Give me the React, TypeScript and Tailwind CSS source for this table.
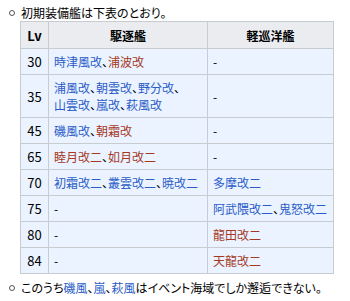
import React from 'react'

type Part = { t: string; red?: boolean }

const rows: { lv: string; dd: Part[][]; cl: Part[] }[] = [
  { lv: '30', dd: [[{ t: '時津風改' }, { t: '浦波改', red: true }]], cl: [] },
  {
    lv: '35',
    dd: [
      [{ t: '浦風改' }, { t: '朝雲改' }, { t: '野分改' }],
      [{ t: '山雲改' }, { t: '嵐改' }, { t: '萩風改' }],
    ],
    cl: [],
  },
  { lv: '45', dd: [[{ t: '磯風改' }, { t: '朝霜改', red: true }]], cl: [] },
  { lv: '65', dd: [[{ t: '睦月改二', red: true }, { t: '如月改二', red: true }]], cl: [] },
  { lv: '70', dd: [[{ t: '初霜改二' }, { t: '叢雲改二' }, { t: '暁改二' }]], cl: [{ t: '多摩改二' }] },
  { lv: '75', dd: [], cl: [{ t: '阿武隈改二' }, { t: '鬼怒改二' }] },
  { lv: '80', dd: [], cl: [{ t: '龍田改二', red: true }] },
  { lv: '84', dd: [], cl: [{ t: '天龍改二', red: true }] },
]

const Links = ({ parts }: { parts: Part[] }) => {
  if (parts.length === 0) return <>-</>
  return (
    <>
      {parts.map((p, i) => (
        <React.Fragment key={i}>
          {i > 0 && '、'}
          <span className={p.red ? 'text-[#a5381e]' : 'text-[#2a5cc8]'}>{p.t}</span>
        </React.Fragment>
      ))}
    </>
  )
}

const Bullet = () => (
  <span className="mt-[5px] mr-[6px] ml-[9px] h-[6px] w-[6px] shrink-0 rounded-full border-[1.5px] border-[#555]" />
)

export default function App() {
  return (
    <div className="h-[301px] w-[350px] overflow-hidden bg-white pt-[5px] font-['Noto_Sans_CJK_JP',sans-serif] text-[12px] leading-[16px] whitespace-nowrap text-black [font-feature-settings:'palt']">
      {/* intro */}
      <div className="flex items-start">
        <Bullet />
        <span>初期装備艦は下表のとおり。</span>
      </div>

      {/* table */}
      <table className="ml-[20px] w-[314px] table-fixed border-collapse border border-[#c8ccd1] leading-[15px]">
        <colgroup>
          <col className="w-[28px]" />
          <col className="w-[159px]" />
          <col />
        </colgroup>
        <thead>
          <tr className="bg-[#eaecf0] font-bold">
            <th className="h-[27px] border border-[#c8ccd1] p-0 text-[13px]">Lv</th>
            <th className="border border-[#c8ccd1] p-0">駆逐艦</th>
            <th className="border border-[#c8ccd1] p-0">軽巡洋艦</th>
          </tr>
        </thead>
        <tbody>
          {rows.map((r) => (
            <tr key={r.lv} className="bg-[#eaf3ff]">
              <td className="border border-[#c8ccd1] py-[5px] text-center text-[13px]">{r.lv}</td>
              <td className={`border border-[#c8ccd1] px-[5px] ${r.dd.length > 1 ? 'py-[4px]' : 'py-[5px]'}`}>
                {r.dd.length === 0 ? (
                  '-'
                ) : (
                  r.dd.map((line, i) => (
                    <div key={i} className={r.dd.length > 1 ? 'leading-[17px]' : ''}>
                      <Links parts={line} />
                      {i < r.dd.length - 1 && '、'}
                    </div>
                  ))
                )}
              </td>
              <td className="border border-[#c8ccd1] px-[5px] py-[5px]">
                <Links parts={r.cl} />
              </td>
            </tr>
          ))}
        </tbody>
      </table>

      {/* note */}
      <div className="mt-[6px] flex items-start">
        <Bullet />
        <span>
          このうち<span className="text-[#2a5cc8]">磯風</span>、<span className="text-[#2a5cc8]">嵐</span>、
          <span className="text-[#2a5cc8]">萩風</span>はイベント海域でしか邂逅できない。
        </span>
      </div>
    </div>
  )
}
